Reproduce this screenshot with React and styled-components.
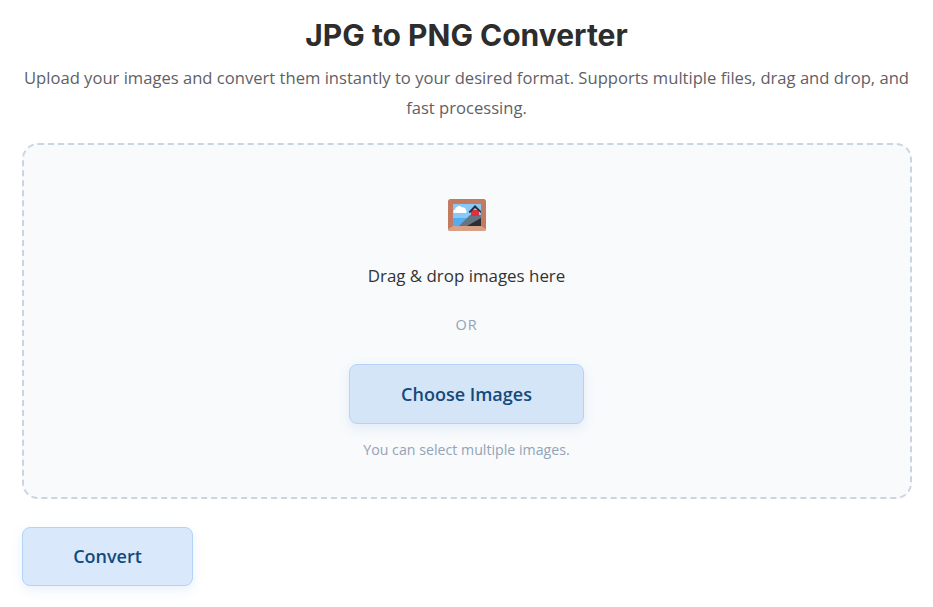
import React from 'react';
import styled, { createGlobalStyle } from 'styled-components';

const GlobalStyle = createGlobalStyle`
    html, body {
        margin: 0;
        padding: 0;
        background: #fff;
    }
    body {
        font-family: "Open Sans", "Noto Sans", sans-serif;
        overflow: hidden;
    }
`;

const Page = styled.div`
    box-sizing: border-box;
    width: 933px;
    height: 607px;
    padding: 16px 21px 0 22px;
    overflow: hidden;
`;

const Title = styled.h1`
    margin: 0 1px 0 0;
    font-family: Inter, sans-serif;
    font-size: 30px;
    line-height: 38px;
    font-weight: 700;
    color: #2d2d2d;
    text-align: center;
`;

const Intro = styled.p`
    margin: 9px 1px 20px 0;
    font-size: 16.6px;
    line-height: 30px;
    color: #5f5f66;
    text-align: center;
`;

const DropZone = styled.div`
    box-sizing: border-box;
    height: 356px;
    padding: 50px 1px 0 0;
    display: flex;
    flex-direction: column;
    align-items: center;
    background: #f8fafc;
    border: 2px dashed #cbd5e1;
    border-radius: 16px;
`;

const PictureIcon = styled.svg`
    display: block;
    width: 40px;
    height: 40px;
`;

const DropText = styled.p`
    margin: 28px 0 0;
    font-size: 16.9px;
    line-height: 26px;
    color: #333;
`;

const OrText = styled.span`
    margin: 25px 0 28px;
    font-size: 14.5px;
    line-height: 22px;
    letter-spacing: 0.8px;
    color: #94a3b8;
`;

const ActionButton = styled.button`
    box-sizing: border-box;
    display: block;
    width: ${(props) => props.$width}px;
    height: ${(props) => props.$height}px;
    padding: 0 0 ${(props) => props.$lift || 0}px;
    font-family: "Open Sans", sans-serif;
    font-size: 18px;
    font-weight: 600;
    color: #134a7c;
    background: ${(props) => props.$bg};
    border: 1px solid #b4d3f8;
    border-radius: 8px;
    box-shadow: 0 4px 12px rgba(100, 150, 220, 0.14);
`;

const Hint = styled.p`
    margin: 16px 0 0;
    font-size: 14.2px;
    line-height: 20px;
    color: #94a3b8;
`;

const Actions = styled.div`
    margin-top: 28px;
`;

function FramedPicture() {
    return (
        <PictureIcon viewBox="0 0 40 40" aria-hidden="true">
            <rect x="1" y="4" width="38" height="32" rx="2.5" fill="#c27a60" />
            <path d="M6 31 H34 L39 34 a2 2 0 0 1 -2 2 H3 a2 2 0 0 1 -2 -2 Z" fill="#d9a088" />
            <rect x="6" y="9" width="28" height="22" fill="#88c9f9" />
            <rect x="6" y="23" width="28" height="8" fill="#55acee" />
            <path d="M7 18 a2 2 0 0 1 1 -3.5 a4 4 0 0 1 7 -2 a3 3 0 0 1 4 3 a1.5 1.5 0 0 1 0 2.5 Z" fill="#fff" />
            <path d="M12 31 L23 20 H34 V31 Z" fill="#66757f" />
            <path d="M20 31 L34 23 V31 Z" fill="#292f33" />
            <rect x="24" y="15" width="8" height="6" fill="#dd2e44" />
            <path d="M21.5 17 L28 10 L34 16 V18 L28 13 L23 18 Z" fill="#292f33" />
        </PictureIcon>
    );
}

export default function App() {
    return (
        <Page>
            <GlobalStyle />
            <Title>JPG to PNG Converter</Title>
            <Intro>
                Upload your images and convert them instantly to your desired format. Supports multiple files, drag and drop, and fast processing.
            </Intro>
            <DropZone>
                <FramedPicture />
                <DropText>Drag &amp; drop images here</DropText>
                <OrText>OR</OrText>
                <ActionButton $width={235} $height={60} $bg="#d4e5f7">Choose Images</ActionButton>
                <Hint>You can select multiple images.</Hint>
            </DropZone>
            <Actions>
                <ActionButton $width={171} $height={59} $lift={2} $bg="#d9e8fa">Convert</ActionButton>
            </Actions>
        </Page>
    );
}
